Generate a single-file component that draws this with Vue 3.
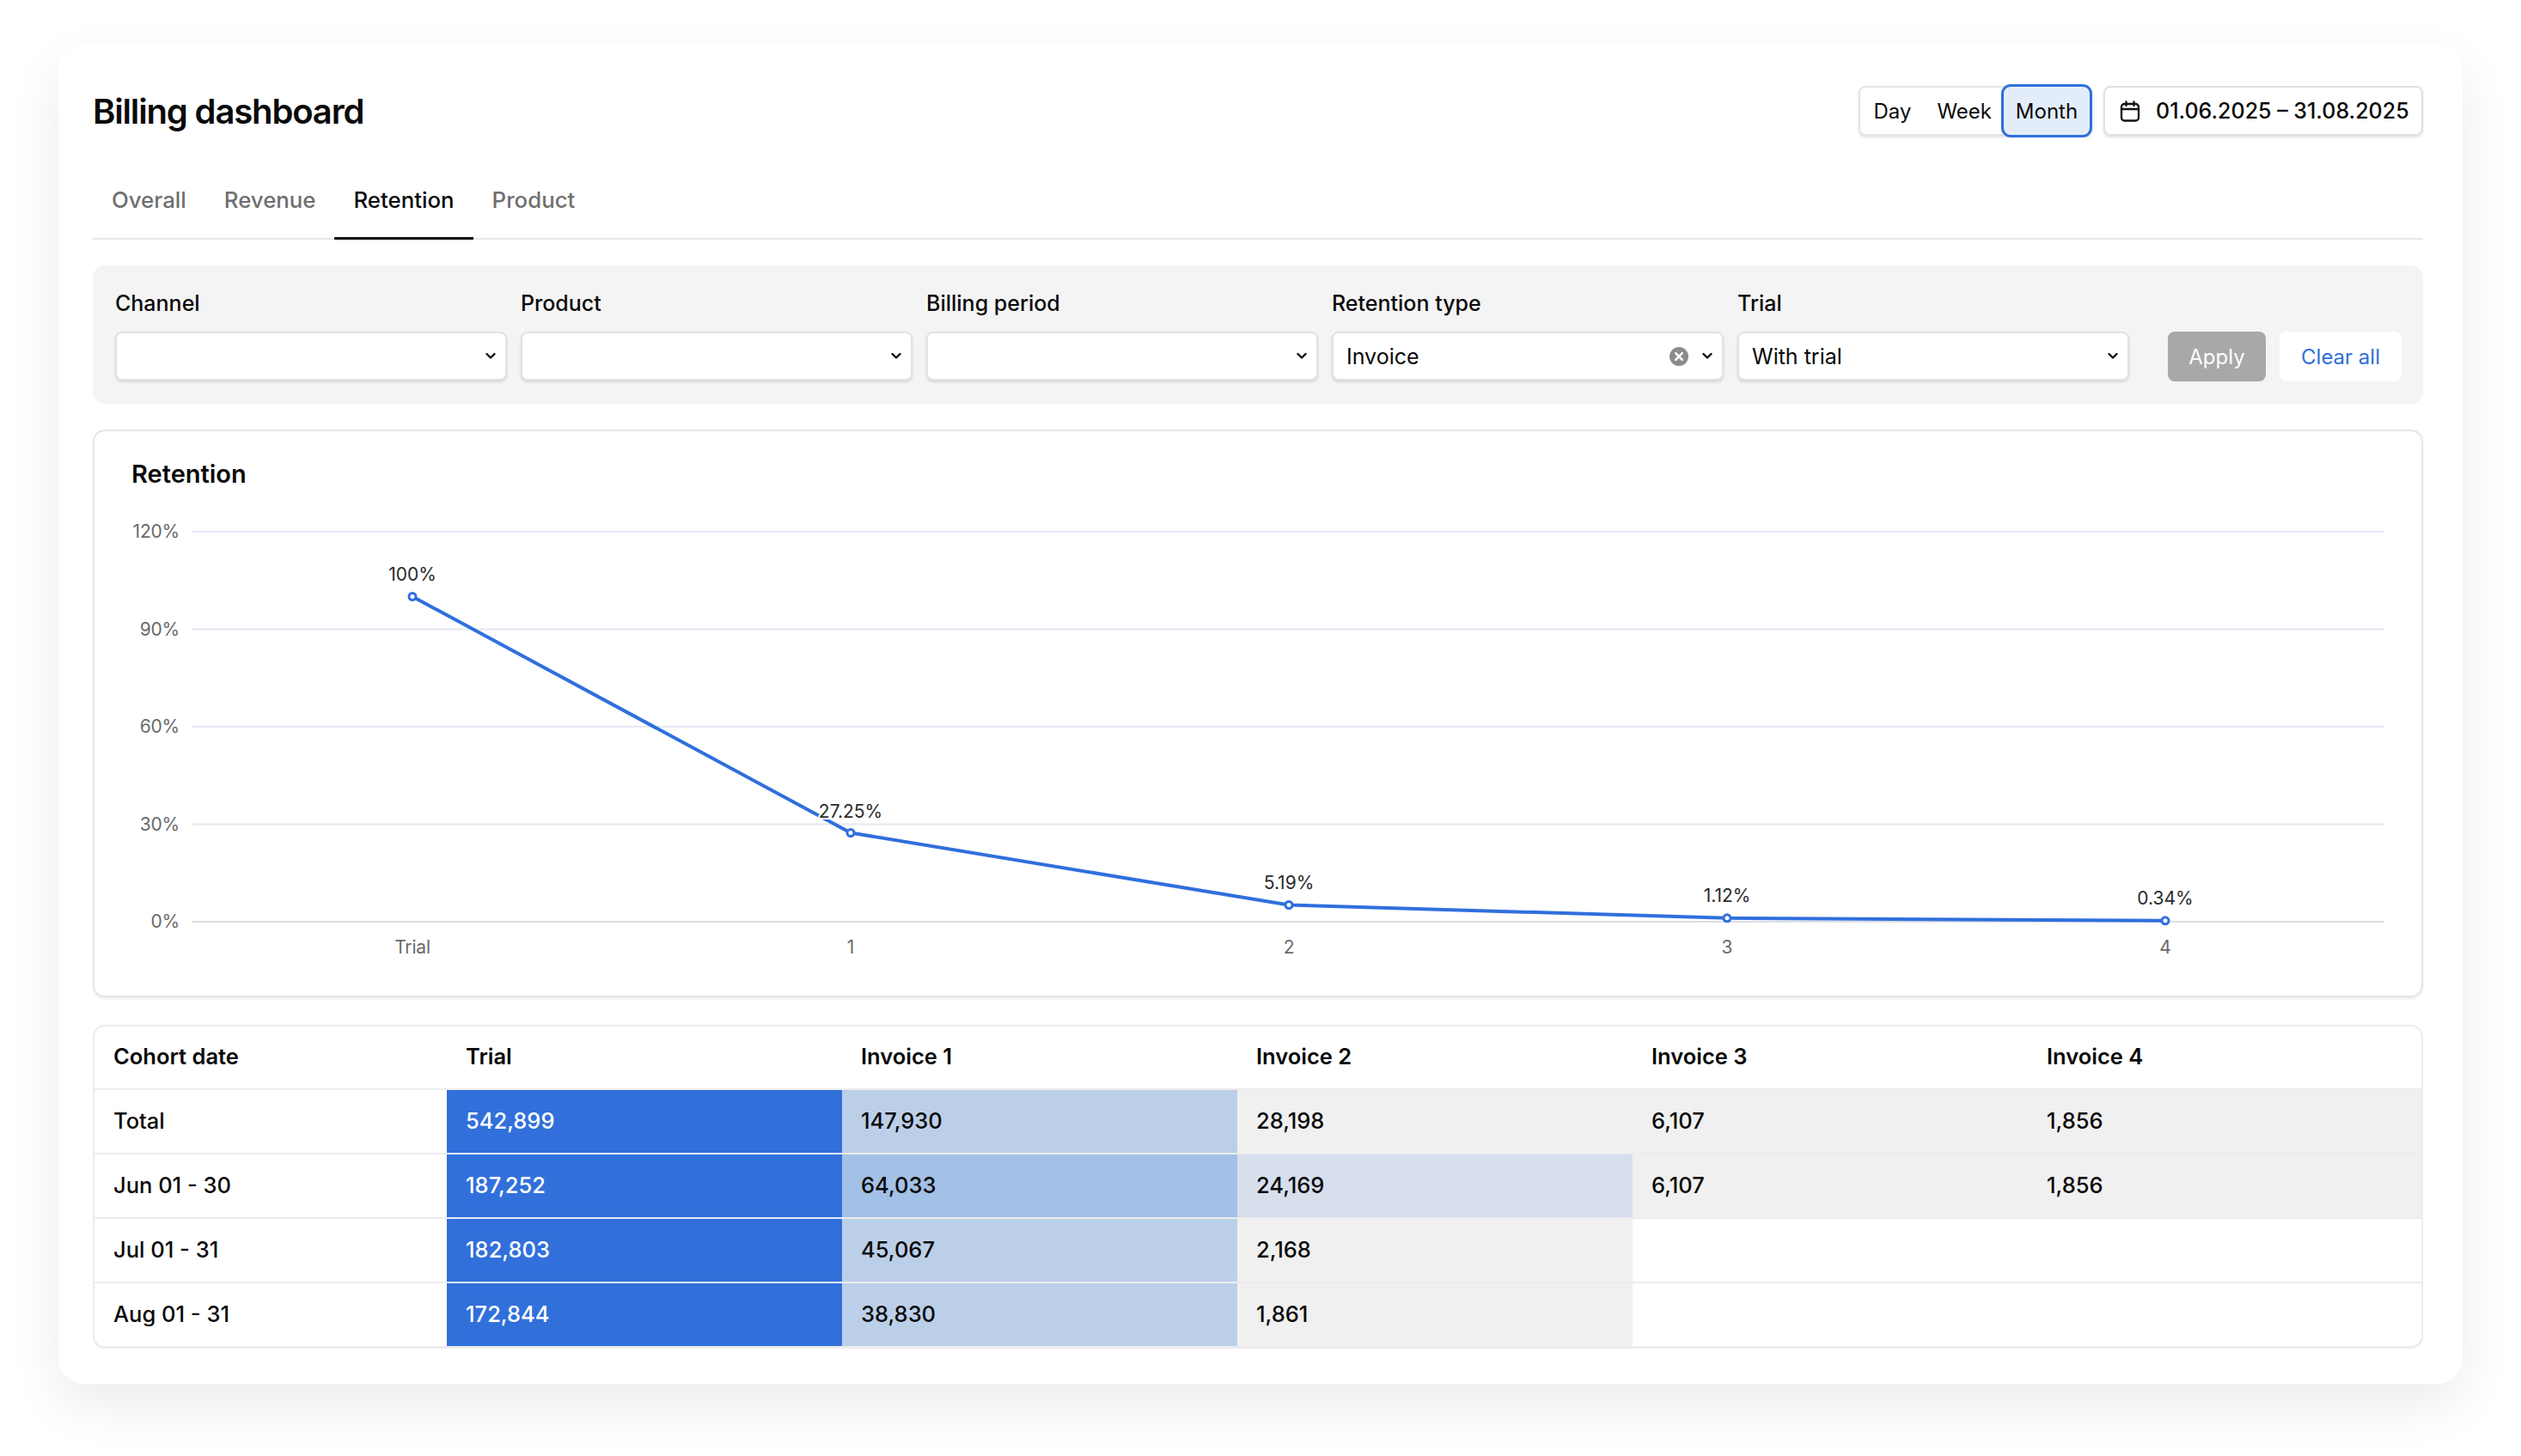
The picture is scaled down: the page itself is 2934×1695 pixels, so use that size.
<script setup>
const tabs = ['Overall', 'Revenue', 'Retention', 'Product']
const filters = [
  { label: 'Channel', value: '' },
  { label: 'Product', value: '' },
  { label: 'Billing period', value: '' },
  { label: 'Retention type', value: 'Invoice', clear: true },
  { label: 'Trial', value: 'With trial' },
]
const gridLines = [
  { y: 619, t: '120%' },
  { y: 732.5, t: '90%' },
  { y: 846, t: '60%' },
  { y: 959.5, t: '30%' },
  { y: 1073, t: '0%' },
]
const points = [
  { x: 480, y: 694.5, label: '100%', ly: 668, name: 'Trial' },
  { x: 990, y: 969.5, label: '27.25%', ly: 944, name: '1' },
  { x: 1500, y: 1053.5, label: '5.19%', ly: 1027, name: '2' },
  { x: 2010, y: 1068.8, label: '1.12%', ly: 1042, name: '3' },
  { x: 2520, y: 1071.8, label: '0.34%', ly: 1045, name: '4' },
]
const linePoints = points.map((p) => `${p.x},${p.y}`).join(' ')
const B = '#3170db'
const L = '#bccfe8'
const M = '#a3c0e6'
const P = '#d7dfed'
const G = '#f0f0f0'
const columns = ['Cohort date', 'Trial', 'Invoice 1', 'Invoice 2', 'Invoice 3', 'Invoice 4']
const rows = [
  { name: 'Total', cells: [['542,899', B], ['147,930', L], ['28,198', G], ['6,107', G], ['1,856', G]] },
  { name: 'Jun 01 - 30', cells: [['187,252', B], ['64,033', M], ['24,169', P], ['6,107', G], ['1,856', G]] },
  { name: 'Jul 01 - 31', cells: [['182,803', B], ['45,067', L], ['2,168', G], ['', ''], ['', '']] },
  { name: 'Aug 01 - 31', cells: [['172,844', B], ['38,830', L], ['1,861', G], ['', ''], ['', '']] },
]
</script>

<template>
  <div class="page">
    <main class="card">
      <header class="top">
        <h1>Billing dashboard</h1>
        <div class="top-actions">
          <div class="segment">
            <span class="seg">Day</span>
            <span class="seg week">Week</span>
            <span class="seg active">Month</span>
          </div>
          <div class="date">
            <svg class="cal" width="24" height="25" viewBox="0 0 24 25" fill="none" stroke="#111" stroke-width="2.3" stroke-linecap="round" stroke-linejoin="round">
              <rect x="2" y="4" width="20" height="19.500" rx="3.500" />
              <path d="M7.500 1.500v4.500M16.500 1.500v4.500M2 10h20" />
            </svg>
            <span>01.06.2025 – 31.08.2025</span>
          </div>
        </div>
      </header>

      <nav class="tabs">
        <span v-for="t in tabs" :key="t" class="tab" :class="{ on: t === 'Retention' }">{{ t }}</span>
      </nav>

      <section class="filters">
        <div v-for="f in filters" :key="f.label" class="field">
          <label>{{ f.label }}</label>
          <div class="select">
            <span class="value">{{ f.value }}</span>
            <svg v-if="f.clear" class="clear" width="22" height="22" viewBox="0 0 22 22">
              <circle cx="11" cy="11" r="11" fill="#8c8c8c" />
              <path d="M7.200 7.200l7.600 7.600M14.800 7.200l-7.600 7.600" stroke="#fff" stroke-width="2.600" stroke-linecap="round" />
            </svg>
            <svg class="chev" width="12" height="9" viewBox="0 0 12 9" fill="none">
              <path d="M1.500 2l4.500 4.500L10.500 2" stroke="#111" stroke-width="2.400" stroke-linecap="round" stroke-linejoin="round" />
            </svg>
          </div>
        </div>
        <button class="btn apply" type="button">Apply</button>
        <button class="btn clear-all" type="button">Clear all</button>
      </section>

      <section class="chart-card">
        <h2>Retention</h2>
        <svg class="chart" width="2708" height="587" viewBox="110 572 2708 587">
          <g v-for="g in gridLines" :key="g.y">
            <line x1="224" x2="2775" :y1="g.y" :y2="g.y" :stroke="g.y === 1073 ? '#dcdee4' : '#e4e8f2'" stroke-width="2" />
            <text x="209" :y="g.y + 7" text-anchor="end" class="axis">{{ g.t }}</text>
          </g>
          <polyline :points="linePoints" fill="none" stroke="#2f6fde" stroke-width="4" stroke-linejoin="round" />
          <g v-for="p in points" :key="p.name">
            <circle :cx="p.x" :cy="p.y" r="4" fill="#fff" stroke="#2f6fde" stroke-width="3" />
            <text :x="p.x" :y="p.ly + 8" text-anchor="middle" class="point">{{ p.label }}</text>
            <text :x="p.x" y="1110" text-anchor="middle" class="axis">{{ p.name }}</text>
          </g>
        </svg>
      </section>

      <div class="table-wrap">
        <table>
          <colgroup>
            <col class="first" />
            <col v-for="n in 4" :key="n" class="mid" />
            <col />
          </colgroup>
          <thead>
            <tr>
              <th v-for="c in columns" :key="c">{{ c }}</th>
            </tr>
          </thead>
          <tbody>
            <tr v-for="r in rows" :key="r.name">
              <td class="name">{{ r.name }}</td>
              <td
                v-for="(c, i) in r.cells"
                :key="i"
                :class="{ strong: c[1] === B }"
                :style="{ background: c[1] || 'transparent' }"
              >{{ c[0] }}</td>
            </tr>
          </tbody>
        </table>
      </div>
    </main>
  </div>
</template>

<style>
html, body { margin: 0; background: #fff; }
</style>

<style scoped>
* { box-sizing: border-box; }
.page { height: 1695px; padding: 51px 68px 84px; overflow: hidden; }
.card {
  padding: 49px 46px 41px 40px;
  background: #fff;
  border-radius: 30px;
  box-shadow: 0 24px 60px rgba(0, 0, 0, 0.08);
  font-family: Inter, "Liberation Sans", sans-serif;
  color: #0a0a0a;
  font-size: 25px;
}
.top { display: flex; justify-content: space-between; align-items: flex-start; height: 59px; }
h1 { margin: 0; font-size: 40px; line-height: 59px; font-weight: 600; letter-spacing: -1.15px; }
.top-actions { display: flex; gap: 13px; align-items: flex-start; }
.segment {
  display: flex; align-items: center; height: 58px; background: #fff; font-size: 24px;
  border: 2px solid #e4e4e4; border-radius: 8px; box-shadow: 0 2px 3px rgba(0,0,0,.12);
}
.seg { padding: 0 15px; }
.seg.week { padding-right: 11px; }
.seg.active {
  display: flex; flex: none; align-items: center; justify-content: center; width: 106px; height: 62px;
  margin-right: -2px; padding: 0;
  background: #e3edfa; border: 3px solid #2f6fdb; border-radius: 11px;
}
.date {
  display: flex; align-items: center; gap: 18px; height: 58px; width: 372px; padding: 0 0 0 17px;
  border: 2px solid #e0e0e0; border-radius: 8px; box-shadow: 0 2px 3px rgba(0,0,0,.12); white-space: nowrap; font-weight: 500;
}
.cal { flex: none; }
.tabs { display: flex; height: 94px; margin-top: 26px; border-bottom: 2px solid #e8e8e8; }
.tab {
  display: flex; align-items: center; height: 94px; padding: 3px 22px 0; border-bottom: 3px solid transparent;
  color: #6f6f6f; font-weight: 500; font-size: 25.8px;
}
.tab.on { color: #0a0a0a; border-bottom-color: #0a0a0a; }
.filters {
  display: flex; align-items: flex-end; gap: 16px; height: 161px; margin-top: 30px;
  padding: 27px 25px 27px 26px; background: #f4f4f4; border-radius: 14px;
}
.field { flex: none; width: 456px; }
.field:nth-child(5) { margin-right: 29px; }
label { display: block; height: 34px; line-height: 34px; margin-bottom: 16px; font-weight: 500; }
.select {
  display: flex; align-items: center; height: 57px; padding: 0 11px 0 15px; background: #fff;
  border: 2px solid #e2e2e2; border-radius: 8px; box-shadow: 0 2px 3px rgba(0,0,0,.12);
}
.value { flex: 1; font-weight: 400; }
.clear { margin-right: 16px; }
.btn { flex: none; height: 58px; margin-bottom: -1px; border: 0; border-radius: 8px; font: inherit; font-size: 24px; padding: 0; }
.apply { width: 114px; background: #a8a8a8; color: #fff; }
.clear-all { width: 142px; background: #fff; color: #2f6fdb; }
.chart-card {
  height: 661px; margin-top: 30px; padding-top: 30px; border: 2px solid #e6e6e6; border-radius: 14px;
  box-shadow: 0 2px 3px rgba(0,0,0,.08);
}
h2 { margin: 0 0 0 43px; font-size: 29px; line-height: 40px; font-weight: 600; }
.chart { display: block; }
.axis { font-size: 21px; fill: #6a6a6a; font-family: Inter, "Liberation Sans", sans-serif; letter-spacing: -0.2px; }
.point {
  font-size: 21px; fill: #2b2b2b; font-family: Inter, "Liberation Sans", sans-serif;
  paint-order: stroke; stroke: #fff; stroke-width: 4px;
}
.table-wrap {
  margin-top: 32px; height: 377px; border: 2px solid #ececec; border-bottom-width: 3px; border-radius: 14px; overflow: hidden;
}
table { width: 2708px; table-layout: fixed; border-collapse: separate; border-spacing: 0; }
.first { width: 410px; }
.mid { width: 460px; }
th, td {
  padding: 0 22px 3px; text-align: left; font-size: 25.5px; border-bottom: 2px solid #ececec; height: 75px; font-weight: 500;
}
th { height: 74px; font-weight: 600; }
tbody tr:last-child td { border-bottom: 0; height: 73px; }
td.strong { color: #fff; border-bottom-color: #e8edf6; }
</style>
